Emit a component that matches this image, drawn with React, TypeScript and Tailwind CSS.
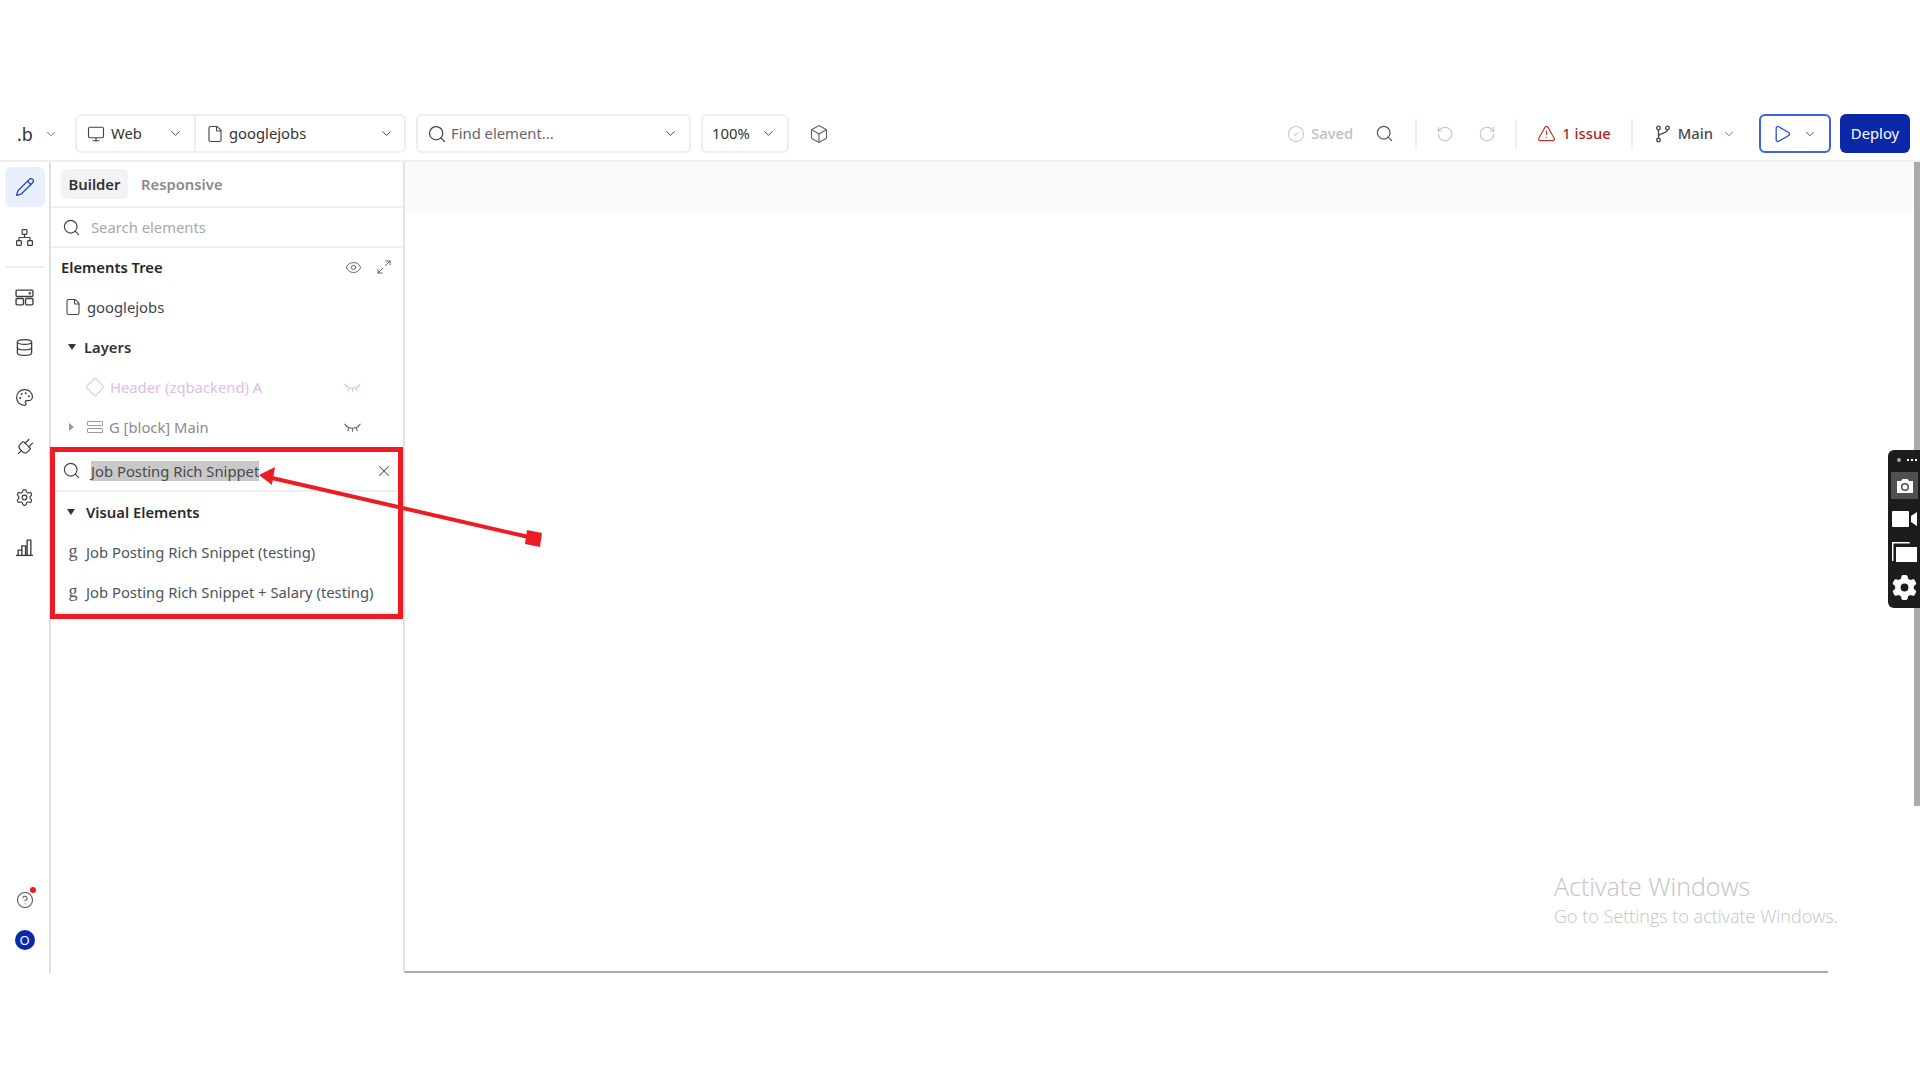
import {
  Box,
  ChevronDown,
  CircleCheck,
  CircleHelp,
  Database,
  Diamond,
  Eye,
  File,
  Maximize2,
  Monitor,
  Network,
  Palette,
  Pencil,
  Play,
  Plug,
  RotateCcw,
  RotateCw,
  Search,
  Settings,
  TriangleAlert,
  X,
} from 'lucide-react';
import { FaGear } from 'react-icons/fa6';

function ClosedEye({ className }: { className?: string }) {
  return (
    <svg viewBox="0 0 16 10" fill="none" stroke="currentColor" strokeWidth="1" className={className}>
      <path d="M1.500 3c3 3.500 10 3.500 13 0" />
      <path d="M0.500 1.500L2.500 4M4.500 5L3.500 8.500M8 6v3M11.500 5l1 3.500M15.500 1.500L13.500 4" />
    </svg>
  );
}

function LayoutIcon({ className }: { className?: string }) {
  return (
    <svg viewBox="0 0 18 16" fill="none" stroke="currentColor" strokeWidth="1.300" className={className}>
      <rect x="1" y="1" width="16" height="6" rx="1" />
      <rect x="1" y="9" width="7" height="6" rx="1" />
      <rect x="10" y="9" width="7" height="6" rx="1" />
      <circle cx="14" cy="4" r="0.500" fill="currentColor" />
    </svg>
  );
}

function BarsIcon({ className }: { className?: string }) {
  return (
    <svg viewBox="0 0 18 18" fill="none" stroke="currentColor" strokeWidth="1.300" className={className}>
      <path d="M1 16.500h16" />
      <path d="M3 16.500v-5h3.500v5M6.500 16.500v-9H10v9M11.500 16.500V2H15v14.500" />
    </svg>
  );
}

function BranchIcon({ className }: { className?: string }) {
  return (
    <svg viewBox="0 0 16 18" fill="none" stroke="currentColor" strokeWidth="1.300" className={className}>
      <circle cx="3.500" cy="3" r="1.800" />
      <circle cx="12.500" cy="3" r="1.800" />
      <circle cx="3.500" cy="15" r="1.800" />
      <path d="M3.500 4.800v8.400M12.500 4.800c0 4-9 3-9 6.500" />
    </svg>
  );
}

function RailButton({ children, active }: { children: React.ReactNode; active?: boolean }) {
  return (
    <div
      className={`w-[40px] h-[40px] flex items-center justify-center rounded-md ${
        active ? 'bg-[#e9f0fd] text-[#2a45c4]' : 'text-[#3d3d3d]'
      }`}
    >
      {children}
    </div>
  );
}

function Rail() {
  const railIcon = 'w-[19px] h-[19px]';
  return (
    <aside className="w-[51px] shrink-0 border-r-2 border-[#dedede] flex flex-col items-center pt-[5px] pb-[23px]">
      <RailButton active>
        <Pencil className="w-[20px] h-[20px]" strokeWidth={1.6} />
      </RailButton>
      <div className="mt-[10px]">
        <RailButton>
          <Network className={railIcon} strokeWidth={1.5} />
        </RailButton>
      </div>
      <div className="w-[40px] h-[2px] bg-[#eeeeee] mt-[9px] mb-[9px]" />
      <div className="flex flex-col gap-[10px]">
        <RailButton>
          <LayoutIcon className={railIcon} />
        </RailButton>
        <RailButton>
          <Database className={railIcon} strokeWidth={1.6} />
        </RailButton>
        <RailButton>
          <Palette className={railIcon} strokeWidth={1.5} />
        </RailButton>
        <RailButton>
          <Plug className="w-[21px] h-[21px] rotate-45" strokeWidth={1.4} />
        </RailButton>
        <RailButton>
          <Settings className={railIcon} strokeWidth={1.5} />
        </RailButton>
        <RailButton>
          <BarsIcon className={railIcon} />
        </RailButton>
      </div>
      <div className="mt-auto flex flex-col items-center">
        <div className="relative w-[40px] h-[40px] flex items-center justify-center text-[#555555]">
          <CircleHelp className="w-[18px] h-[18px]" strokeWidth={1.4} />
          <span className="absolute top-[7px] right-[9px] w-[6px] h-[6px] rounded-full bg-[#f01818]" />
        </div>
        <div className="mt-[10px] w-[20px] h-[20px] rounded-full bg-[#0a28a8] text-white text-[13px] leading-[20px] text-center">
          O
        </div>
      </div>
    </aside>
  );
}

function TreeRow({ children }: { children: React.ReactNode }) {
  return <div className="h-[40px] flex items-center relative">{children}</div>;
}

function SnippetRow({ label }: { label: string }) {
  return (
    <div className="h-[40px] flex items-center">
      <span className="w-[16px] ml-[14px] mr-[5px] -mt-[3px] text-center text-[#555555] text-[18px] leading-none font-['Liberation_Serif',serif]">
        g
      </span>
      <span className="text-[#4a5560]">{label}</span>
    </div>
  );
}

function Panel() {
  return (
    <aside className="w-[354px] shrink-0 border-r-2 border-[#e3e3e3] flex flex-col">
      <div className="h-[46px] shrink-0 border-b-2 border-[#f0f0f0] flex items-center pl-[10px] font-semibold">
        <span className="w-[67px] h-[30px] rounded-md bg-[#f3f3f3] text-[#333333] flex items-center justify-center">
          Builder
        </span>
        <span className="ml-[13px] text-[#8a8a8a]">Responsive</span>
      </div>
      <div className="h-[40px] shrink-0 border-b-2 border-[#f0f0f0] flex items-center pl-[11px]">
        <Search className="w-[19px] h-[19px] text-[#444444]" strokeWidth={1.5} />
        <span className="ml-[10px] text-[#a8a8a8]">Search elements</span>
      </div>
      <div className="flex flex-col pl-[10px] pr-[11px] mb-[4px] -mt-[1px]">
        <TreeRow>
          <span className="font-semibold text-[#262626]">Elements Tree</span>
          <Eye className="ml-auto mr-[14px] w-[17px] h-[17px] text-[#666666]" strokeWidth={1.4} />
          <Maximize2 className="w-[16px] h-[16px] text-[#555555]" strokeWidth={1.4} />
        </TreeRow>
        <TreeRow>
          <File className="ml-[3px] w-[18px] h-[18px] text-[#444444]" strokeWidth={1.4} />
          <span className="ml-[5px] text-[#3c4650]">googlejobs</span>
        </TreeRow>
        <TreeRow>
          <span className="ml-[7px] w-0 h-0 border-x-[4.500px] border-x-transparent border-t-[6px] border-t-[#333333]" />
          <span className="ml-[8px] font-semibold text-[#333333]">Layers</span>
        </TreeRow>
        <TreeRow>
          <Diamond className="ml-[24px] w-[20px] h-[20px] text-[#e6c4ee]" strokeWidth={1.4} />
          <span className="ml-[5px] text-[#e0bcea]">Header (zqbackend) A</span>
          <ClosedEye className="absolute left-[283px] w-[17px] h-[11px] text-[#e0bcea]" />
        </TreeRow>
        <TreeRow>
          <span className="ml-[8px] w-0 h-0 border-y-[4px] border-y-transparent border-l-[5px] border-l-[#9a9a9a]" />
          <div className="ml-[13px] w-[16px] flex flex-col gap-[2px]">
            <span className="h-[5px] rounded-[1px] border border-[#9a9a9a]" />
            <span className="h-[5px] rounded-[1px] border border-[#9a9a9a]" />
          </div>
          <span className="ml-[6px] text-[#8c8c8c]">G [block] Main</span>
          <ClosedEye className="absolute left-[283px] w-[17px] h-[11px] text-[#666666]" />
        </TreeRow>
      </div>
      <div className="h-[41px] shrink-0 border-b-2 border-[#f0f0f0] flex items-center pl-[11px] pr-[10px]">
        <Search className="w-[19px] h-[19px] text-[#444444]" strokeWidth={1.5} />
        <span className="ml-[10px] h-[20px] leading-[20px] bg-[#c8c8c8] text-[#4a4a4a]">Job Posting Rich Snippet</span>
        <X className="ml-auto w-[18px] h-[18px] text-[#555555]" strokeWidth={1.4} />
      </div>
      <div className="border-b-2 border-[#eeeeee]">
        <div className="h-[40px] flex items-center">
          <span className="ml-[16px] w-0 h-0 border-x-[4.500px] border-x-transparent border-t-[6px] border-t-[#333333]" />
          <span className="ml-[11px] font-semibold text-[#2b2b2b]">Visual Elements</span>
        </div>
        <SnippetRow label="Job Posting Rich Snippet (testing)" />
        <SnippetRow label="Job Posting Rich Snippet + Salary (testing)" />
      </div>
    </aside>
  );
}

function Toolbar() {
  const chevron = 'w-[15px] h-[15px] text-[#444444]';
  const divider = 'w-[2px] h-[30px] bg-[#eeeeee]';
  return (
    <header className="h-[57px] shrink-0 border-b-2 border-[#eeeeee] pt-[2px] flex items-center text-[#333333]">
      <span className="ml-[17px] w-[16px] text-[18px] leading-none text-[#333333]">.b</span>
      <ChevronDown className="ml-[11px] w-[14px] h-[14px] text-[#666666]" strokeWidth={1.5} />
      <div className="ml-[17px] h-[39px] w-[331px] border-2 border-[#eeeeee] rounded-md flex items-center">
        <div className="w-[119px] h-full border-r-2 border-[#eeeeee] flex items-center pl-[10px]">
          <Monitor className="w-[18px] h-[18px] text-[#444444]" strokeWidth={1.5} />
          <span className="ml-[6px]">Web</span>
          <ChevronDown className={`ml-auto mr-[11px] ${chevron}`} strokeWidth={1.6} />
        </div>
        <div className="flex-1 h-full flex items-center pl-[10px]">
          <File className="w-[18px] h-[18px] text-[#444444]" strokeWidth={1.5} />
          <span className="ml-[5px]">googlejobs</span>
          <ChevronDown className={`ml-auto mr-[10px] ${chevron}`} strokeWidth={1.6} />
        </div>
      </div>
      <div className="ml-[10px] h-[39px] w-[275px] border-2 border-[#eeeeee] rounded-md flex items-center pl-[9px]">
        <Search className="w-[20px] h-[20px] text-[#444444]" strokeWidth={1.5} />
        <span className="ml-[4px] text-[#666666]">Find element...</span>
        <ChevronDown className={`ml-auto mr-[11px] ${chevron}`} strokeWidth={1.6} />
      </div>
      <div className="ml-[10px] h-[39px] w-[88px] border-2 border-[#eeeeee] rounded-md flex items-center pl-[9px]">
        <span>100%</span>
        <ChevronDown className={`ml-auto mr-[11px] ${chevron}`} strokeWidth={1.6} />
      </div>
      <Box className="ml-[20px] w-[20px] h-[20px] text-[#666666]" strokeWidth={1.4} />

      <CircleCheck className="ml-auto w-[18px] h-[18px] text-[#c4c4c4]" strokeWidth={1.4} />
      <span className="ml-[6px] font-medium text-[#c0c0c0]">Saved</span>
      <Search className="ml-[22px] w-[19px] h-[19px] text-[#555555]" strokeWidth={1.5} />
      <div className={`ml-[21px] ${divider}`} />
      <RotateCcw className="ml-[19px] w-[18px] h-[18px] text-[#c4c4c4]" strokeWidth={1.5} />
      <RotateCw className="ml-[24px] w-[18px] h-[18px] text-[#c4c4c4]" strokeWidth={1.5} />
      <div className={`ml-[19px] ${divider}`} />
      <TriangleAlert className="ml-[20px] w-[19px] h-[19px] text-[#c0362c]" strokeWidth={1.5} />
      <span className="ml-[6px] font-medium text-[#b3261e]">1 issue</span>
      <div className={`ml-[20px] ${divider}`} />
      <BranchIcon className="ml-[22px] w-[16px] h-[18px] text-[#444444]" />
      <span className="ml-[7px] font-medium text-[#4a4a4a]">Main</span>
      <ChevronDown className="ml-[9px] w-[14px] h-[14px] text-[#666666]" strokeWidth={1.5} />
      <div className="ml-[23px] w-[72px] h-[39px] border-2 border-[#3b63dc] rounded-md flex items-center pl-[11px]">
        <Play className="w-[20px] h-[20px] text-[#2a45c4]" strokeWidth={1.5} />
        <ChevronDown className="ml-[11px] w-[14px] h-[14px] text-[#2a45c4]" strokeWidth={1.6} />
      </div>
      <div className="ml-[9px] mr-[10px] w-[70px] h-[39px] rounded-md bg-[#0a28a8] text-white flex items-center justify-center">
        Deploy
      </div>
    </header>
  );
}

function Canvas() {
  return (
    <main className="flex-1 min-w-0 flex flex-col">
      <div className="flex-1 flex min-h-0">
        <div className="flex-1 min-w-0">
          <div className="h-[50px] bg-[#fafafa]" />
        </div>
        <div className="w-[6px] bg-white">
          <div className="h-[644px] bg-[#aaaaaa]" />
        </div>
      </div>
      <div className="h-[2px] w-[1423px] bg-[#aaaaaa]" />
    </main>
  );
}

export default function App() {
  return (
    <div className="relative w-[1920px] h-[1080px] overflow-hidden bg-white font-['Noto_Sans','Open_Sans',sans-serif] text-[14.800px]">
      <div className="pt-[105px]">
        <Toolbar />
        <div className="h-[811px] flex">
          <Rail />
          <Panel />
          <Canvas />
        </div>
      </div>

      {/* red highlight drawn over the panel */}
      <div className="absolute left-[50px] top-[447px] w-[353px] h-[172px] border-[5px] border-[#ed1c24]" />
      <svg className="absolute left-0 top-0 w-[1920px] h-[1080px] pointer-events-none" viewBox="0 0 1920 1080" fill="none">
        <path d="M533 538L272 478" stroke="#ed1c24" strokeWidth="4" />
        <path d="M259 475L275 467L272 485Z" fill="#ed1c24" />
        <path d="M527 530L542 533L540 547L525 544Z" fill="#ed1c24" />
      </svg>

      {/* recorder widget */}
      <div className="absolute right-0 top-[450px] w-[32px] h-[158px] rounded-l-md bg-[#1c1c1c] flex flex-col items-start pl-[3px] pt-[2px]">
        <div className="w-full h-[15px] flex items-center pl-[6px] gap-[6px]">
          <span className="w-[4px] h-[4px] rounded-full bg-[#aaaaaa]" />
          <span className="flex gap-[2px]">
            <span className="w-[2px] h-[2px] bg-white" />
            <span className="w-[2px] h-[2px] bg-white" />
            <span className="w-[2px] h-[2px] bg-white" />
          </span>
        </div>
        <div className="mt-[5px] w-[27px] h-[27px] bg-[#505050] flex items-center justify-center">
          <svg viewBox="0 0 18 16" className="w-[18px] h-[16px]">
            <path d="M1 3h4l1.500-2h5L13 3h4v12H1z" fill="#ffffff" />
            <circle cx="9" cy="9" r="4" fill="#505050" />
            <circle cx="9" cy="9" r="2.500" fill="#ffffff" />
          </svg>
        </div>
        <svg viewBox="0 0 25 16" className="mt-[12px] ml-[1px] w-[25px] h-[16px]">
          <path d="M0 1a1 1 0 0 1 1-1h15a1 1 0 0 1 1 1v14a1 1 0 0 1-1 1H1a1 1 0 0 1-1-1zM19 5l6-4v14l-6-4z" fill="#ffffff" />
        </svg>
        <svg viewBox="0 0 25 20" className="mt-[15px] ml-[1px] w-[25px] h-[20px]">
          <path d="M0.700 19V0.700h17" stroke="#ffffff" strokeWidth="1.500" fill="none" />
          <path d="M4 5h21v15H4z" fill="#ffffff" />
        </svg>
        <FaGear className="mt-[13px] ml-[1px] w-[25px] h-[25px] text-white" />
      </div>

      {/* OS watermark */}
      <div className="absolute left-[1554px] top-[870px] text-[#c4c4c4] font-['Open_Sans',sans-serif]">
        <div className="text-[25px] leading-[32px] font-light">Activate Windows</div>
        <div className="text-[18px] leading-[28px] font-light">Go to Settings to activate Windows.</div>
      </div>
    </div>
  );
}
